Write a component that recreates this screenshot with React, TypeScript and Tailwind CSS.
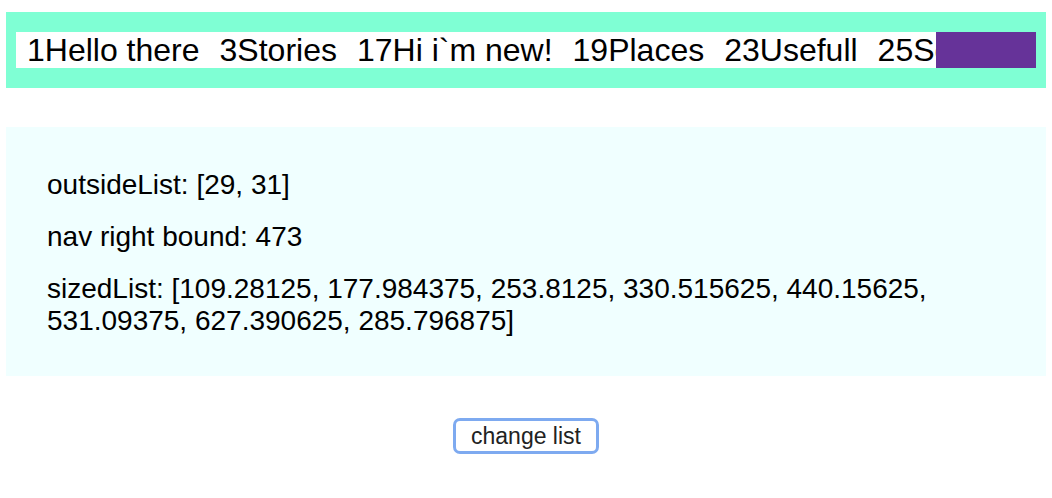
import React from "react";

const items = ["1Hello there", "3Stories", "17Hi i`m new!", "19Places", "23Usefull", "25Second"];

export default function App() {
  return (
    <div className="min-h-[498px] bg-white font-['Liberation_Sans',Arial,sans-serif] text-black">
      <div className="pt-[12px] px-[6px]">
        <nav className="bg-[#7fffd4] px-[10px] py-[20px]">
          <div className="relative h-[36px] overflow-hidden bg-white">
            <ul className="flex h-full items-center gap-[20px] whitespace-nowrap pl-[11px] text-[32px] leading-[36px]">
              {items.map((t) => (
                <li key={t} className="shrink-0">{t}</li>
              ))}
            </ul>
            <div className="absolute right-0 top-0 h-full w-[100px] bg-[#663399]" />
          </div>
        </nav>
      </div>
      <div className="mx-[6px] mt-[39px] bg-[#f0ffff] pl-[41px] pr-[41px] pt-[42px] pb-[39px] text-[28px] leading-[32px]">
        <p className="mb-[20px]">outsideList: [29, 31]</p>
        <p className="mb-[20px]">nav right bound: 473</p>
        <p>sizedList: [109.28125, 177.984375, 253.8125, 330.515625, 440.15625, 531.09375, 627.390625, 285.796875]</p>
      </div>
      <div className="mt-[42px] flex justify-center">
        <button className="h-[36px] rounded-[7px] border-[3px] border-[#7eaaf0] bg-white px-[15px] text-[23px] leading-none text-[#222]">
          change list
        </button>
      </div>
    </div>
  );
}
